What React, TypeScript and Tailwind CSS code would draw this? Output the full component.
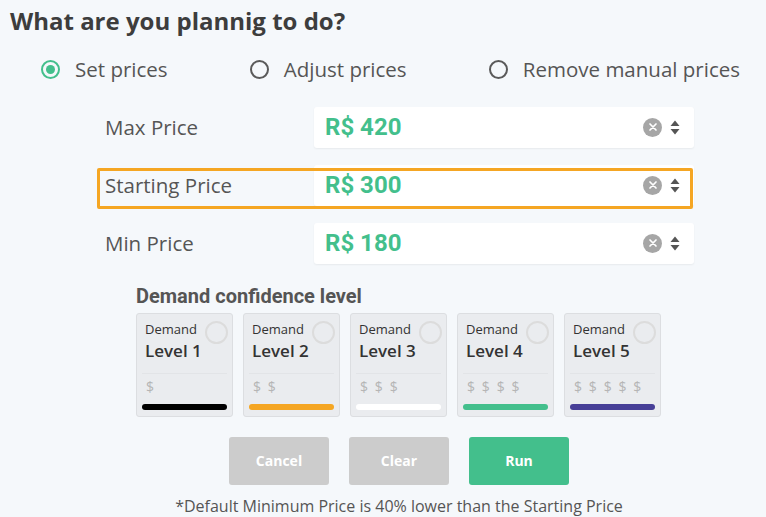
import React from "react";

const levels = [
  { n: 1, bar: "bg-[#000000]" },
  { n: 2, bar: "bg-[#f5a623]" },
  { n: 3, bar: "bg-[#ffffff]" },
  { n: 4, bar: "bg-[#43bf8c]" },
  { n: 5, bar: "bg-[#473f97]" },
];

function Radio({ checked, label }: { checked?: boolean; label: string }) {
  return (
    <div className="flex items-center gap-[15px]">
      {checked ? (
        <span className="w-[19px] h-[19px] rounded-full border-[2.5px] border-[#43bf8c] flex items-center justify-center">
          <span className="w-[9px] h-[9px] rounded-full bg-[#43bf8c]" />
        </span>
      ) : (
        <span className="w-[19px] h-[19px] rounded-full border-[2.5px] border-[#5a5a5a]" />
      )}
      <span className="text-[20.5px] text-[#555]">{label}</span>
    </div>
  );
}

function PriceInput({ value }: { value: string }) {
  return (
    <div className="w-[380px] h-[41px] bg-white rounded-[3px] shadow-[0_1px_2px_rgba(0,0,0,0.06)] flex items-center pl-[11px] pr-[14px]">
      <span className="flex-1 text-[24px] font-bold text-[#43bf8c] font-['Roboto',sans-serif]">{value}</span>
      <span className="w-[19px] h-[19px] rounded-full bg-[#a6a6a6] flex items-center justify-center">
        <svg width="10" height="10" viewBox="0 0 10 10">
          <path d="M2 2 L8 8 M8 2 L2 8" stroke="white" strokeWidth="1.7" strokeLinecap="round" />
        </svg>
      </span>
      <svg className="ml-[8px]" width="10" height="17" viewBox="0 0 10 17">
        <path d="M5 1.5 L9.5 7 L0.5 7 Z" fill="#555" />
        <path d="M0.5 10 L9.5 10 L5 15.5 Z" fill="#555" />
      </svg>
    </div>
  );
}

function Row({ label, value, highlight }: { label: string; value: string; highlight?: boolean }) {
  return (
    <div className="relative flex items-center">
      <span className="w-[209px] pl-[105px] text-[20.5px] text-[#555] whitespace-nowrap box-content">{label}</span>
      <PriceInput value={value} />
      {highlight && (
        <div className="absolute left-[97px] top-[3px] w-[596px] h-[41px] border-[3px] border-[#f5a623] rounded-[2px] pointer-events-none" />
      )}
    </div>
  );
}

export default function App() {
  return (
    <div className="w-[766px] h-[517px] bg-[#f5f8fb] font-['Open_Sans',sans-serif] text-[#555] overflow-hidden">
      <h1 className="pl-[10px] pt-[5px] text-[24px] font-bold text-[#3d3d3d] leading-[32px]">What are you plannig to do?</h1>
      <div className="flex justify-between pl-[41px] pr-[26px] mt-[17px]">
        <Radio checked label="Set prices" />
        <Radio label="Adjust prices" />
        <Radio label="Remove manual prices" />
      </div>
      <div className="flex flex-col gap-[17px] mt-[22px]">
        <Row label="Max Price" value="R$ 420" />
        <Row label="Starting Price" value="R$ 300" highlight />
        <Row label="Min Price" value="R$ 180" />
      </div>
      <div className="pl-[136px] mt-[20px]">
        <div className="text-[20px] font-bold text-[#555] font-['Roboto',sans-serif] leading-[24px]">Demand confidence level</div>
        <div className="flex gap-[10px] mt-[5px]">
          {levels.map((l) => (
            <div key={l.n} className="w-[97px] h-[104px] bg-[#eaecef] border border-[#dcdee1] rounded-[3px] px-[5px] pt-[7px] flex flex-col">
              <div className="flex justify-between pl-[3px]">
                <div>
                  <div className="text-[13px] leading-[16px] text-[#333]">Demand</div>
                  <div className="text-[17px] font-semibold leading-[24px] text-[#333] mt-[2px]">Level {l.n}</div>
                </div>
                <span className="w-[23px] h-[23px] rounded-full border-[2px] border-[#dcdcdc] -mr-[1px]" />
              </div>
              <div className="h-px bg-[#e2e4e7] mt-[10px]" />
              <div className="text-[14px] text-[#b5b5b5] pl-[4px] mt-[5px] leading-[16px] tracking-[1.6px] whitespace-pre">
                {Array.from({ length: l.n }).map(() => "$").join(" ")}
              </div>
              <div className={`h-[6px] rounded-full mt-[9px] ${l.bar}`} />
            </div>
          ))}
        </div>
      </div>
      <div className="flex justify-center gap-[20px] mt-[20px] pl-[32px]">
        <button className="w-[100px] h-[48px] rounded-[3px] bg-[#cccccc] text-white font-bold text-[14px]">Cancel</button>
        <button className="w-[100px] h-[48px] rounded-[3px] bg-[#cccccc] text-white font-bold text-[14px]">Clear</button>
        <button className="w-[100px] h-[48px] rounded-[3px] bg-[#43bf8c] text-white font-bold text-[14px]">Run</button>
      </div>
      <div className="text-center text-[16px] text-[#555] mt-[9px] pl-[32px]">*Default Minimum Price is 40% lower than the Starting Price</div>
    </div>
  );
}
